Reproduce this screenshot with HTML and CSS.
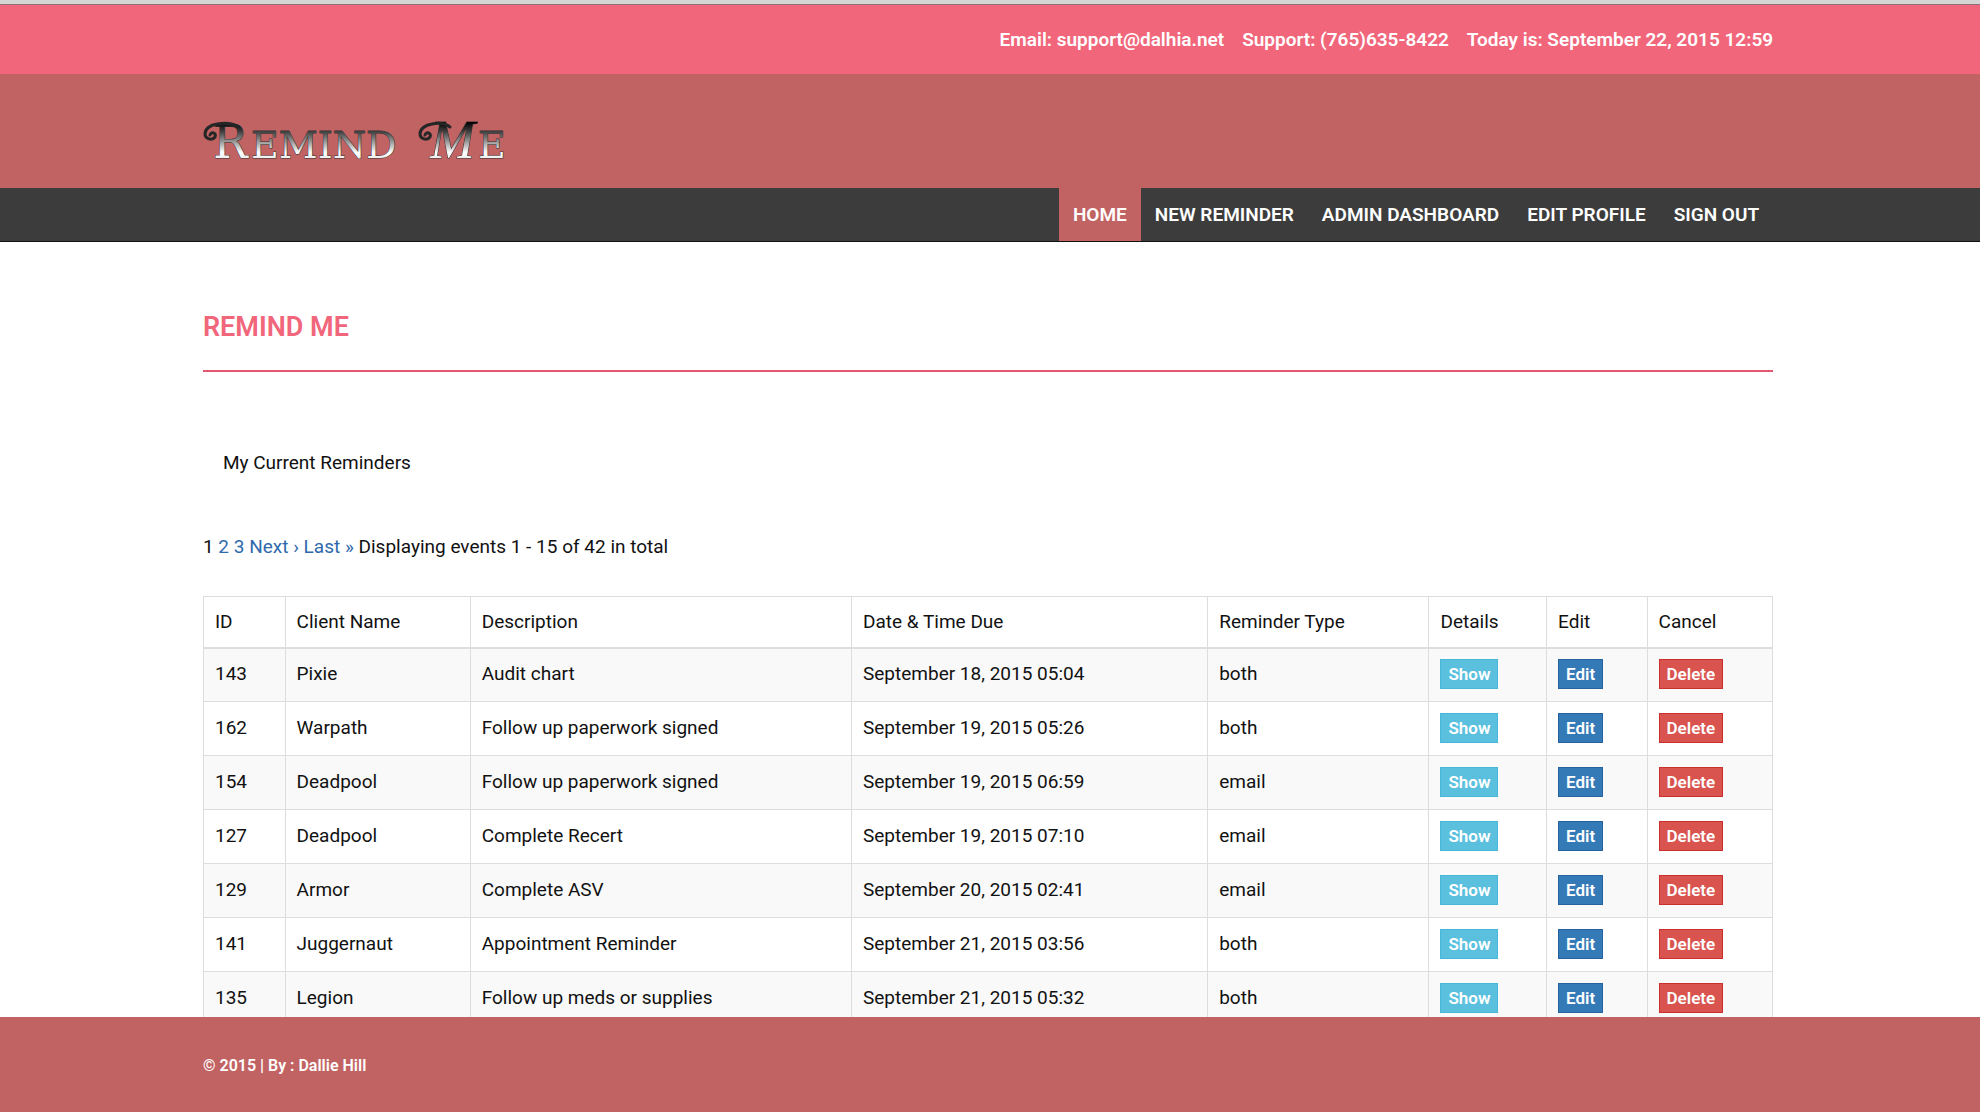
FILE: index.html
```html
<!DOCTYPE html>
<html lang="en">
<head>
<meta charset="utf-8">
<title>Remind Me</title>
<meta name="viewport" content="width=device-width, initial-scale=1">
<link rel="stylesheet" href="styles.css">
</head>
<body>
<header>
  <div class="topbar">
    <div class="container topbar-inner">
      <span>Email: support@dalhia.net</span>
      <span>Support: (765)635-8422</span>
      <span>Today is: September 22, 2015 12:59</span>
    </div>
  </div>
  <div class="brand">
    <div class="container">
      <a class="logo" href="#">
        <svg width="306" height="42" viewBox="0 0 306 42" role="img" aria-label="Remind Me">
          <defs>
            <linearGradient id="metal" gradientUnits="userSpaceOnUse" x1="0" y1="3" x2="0" y2="39">
              <stop offset="0" stop-color="#000"/>
              <stop offset=".25" stop-color="#3a3a3a"/>
              <stop offset=".55" stop-color="#9a9a9a"/>
              <stop offset=".85" stop-color="#fff"/>
              <stop offset="1" stop-color="#eee"/>
            </linearGradient>
          </defs>
          <g class="logo-text">
            <text class="logo-cap" x="10" y="39">R</text>
            <text class="logo-small" x="48" y="39">EMIND</text>
            <text class="logo-cap logo-cap-m" x="227" y="39">M</text>
            <text class="logo-small" x="275" y="39">E</text>
          </g>
          <g class="logo-swash">
            <path d="M34 7C27 3 19 4 14 5C7 6 2 10 2 15C2 20 9 22 12 18C14 14 8 12 7 16"/>
            <path d="M247 8C241 3 234 4 229 5C222 6 217 10 217 15C217 20 224 22 227 18C229 14 223 12 222 16"/>
          </g>
        </svg>
      </a>
    </div>
  </div>
  <nav class="menu">
    <ul class="container menu-list">
      <li><a class="active" href="#">HOME</a></li>
      <li><a href="#">NEW REMINDER</a></li>
      <li><a href="#">ADMIN DASHBOARD</a></li>
      <li><a href="#">EDIT PROFILE</a></li>
      <li><a href="#">SIGN OUT</a></li>
    </ul>
  </nav>
</header>
<main>
  <div class="container">
    <h1>REMIND ME</h1>
    <h2>My Current Reminders</h2>
    <p class="pages">1 <a href="#">2</a> <a href="#">3</a> <a href="#">Next ›</a> <a href="#">Last »</a> Displaying events 1 - 15 of 42 in total</p>
    <table>
      <colgroup><col class="c-id"><col class="c-client"><col class="c-desc"><col class="c-date"><col class="c-type"><col class="c-show"><col class="c-edit"><col class="c-cancel"></colgroup>
      <thead>
        <tr><th>ID</th><th>Client Name</th><th>Description</th><th>Date &amp; Time Due</th><th>Reminder Type</th><th>Details</th><th>Edit</th><th>Cancel</th></tr>
      </thead>
      <tbody>
        <tr><td>143</td><td>Pixie</td><td>Audit chart</td><td>September 18, 2015 05:04</td><td>both</td><td><button class="show">Show</button></td><td><button class="edit">Edit</button></td><td><button class="delete">Delete</button></td></tr>
        <tr><td>162</td><td>Warpath</td><td>Follow up paperwork signed</td><td>September 19, 2015 05:26</td><td>both</td><td><button class="show">Show</button></td><td><button class="edit">Edit</button></td><td><button class="delete">Delete</button></td></tr>
        <tr><td>154</td><td>Deadpool</td><td>Follow up paperwork signed</td><td>September 19, 2015 06:59</td><td>email</td><td><button class="show">Show</button></td><td><button class="edit">Edit</button></td><td><button class="delete">Delete</button></td></tr>
        <tr><td>127</td><td>Deadpool</td><td>Complete Recert</td><td>September 19, 2015 07:10</td><td>email</td><td><button class="show">Show</button></td><td><button class="edit">Edit</button></td><td><button class="delete">Delete</button></td></tr>
        <tr><td>129</td><td>Armor</td><td>Complete ASV</td><td>September 20, 2015 02:41</td><td>email</td><td><button class="show">Show</button></td><td><button class="edit">Edit</button></td><td><button class="delete">Delete</button></td></tr>
        <tr><td>141</td><td>Juggernaut</td><td>Appointment Reminder</td><td>September 21, 2015 03:56</td><td>both</td><td><button class="show">Show</button></td><td><button class="edit">Edit</button></td><td><button class="delete">Delete</button></td></tr>
        <tr><td>135</td><td>Legion</td><td>Follow up meds or supplies</td><td>September 21, 2015 05:32</td><td>both</td><td><button class="show">Show</button></td><td><button class="edit">Edit</button></td><td><button class="delete">Delete</button></td></tr>
      </tbody>
    </table>
  </div>
</main>
<footer>
  <div class="container">© 2015 | By : Dallie Hill</div>
</footer>
</body>
</html>
```

FILE: styles.css
```css
* { box-sizing: border-box; }

body {
  margin: 0;
  height: 100vh;
  display: flex;
  flex-direction: column;
  background: #fff;
  color: #111;
  font: 19px/28px Roboto, "Liberation Sans", sans-serif;
}

header, footer { flex: none; }

a { color: #2f69ad; text-decoration: none; }

.container {
  width: 100%;
  padding: 0 calc(10.4% + 1px) 0 calc(10.2% + 1px);
}

.topbar {
  border-top: 4px solid #d5d5d5;
  background: #f1667b;
  color: #fff;
  font-weight: 600;
  box-shadow: inset 0 1px #8d7078;
}

.topbar-inner {
  display: flex;
  justify-content: flex-end;
  gap: 18px;
  padding-top: 22px;
  padding-bottom: 20px;
}

.brand {
  background: #c26363;
  padding: 45px 0 27px;
}

.logo { display: block; width: 306px; height: 42px; }
.logo svg { display: block; overflow: visible; }

.logo-text {
  fill: url(#metal);
  stroke: #333;
  stroke-width: 1px;
  paint-order: stroke;
  font-family: "DejaVu Serif", serif;
}

.logo-cap { font-size: 46px; }
.logo-cap-m { font-family: "Liberation Serif", serif; font-size: 54px; font-style: italic; }
.logo-small { font-size: 38px; }

.logo-swash {
  fill: none;
  stroke: #262626;
  stroke-width: 3px;
  stroke-linecap: round;
}

.menu {
  background: #3c3c3c;
  border-bottom: 1px solid #111;
}

.menu-list {
  display: flex;
  justify-content: flex-end;
  list-style: none;
  margin: 0;
}

.menu-list a {
  display: block;
  padding: 13px 14px 12px;
  color: #fff;
  font-weight: 600;
}

.menu-list .active { background: #c26363; }

main {
  flex: 1;
  min-height: 0;
  overflow: auto;
  scrollbar-width: none;
}

h1 {
  margin: 65px 0 0;
  padding-bottom: 23px;
  border-bottom: 2px solid #e4566f;
  color: #f1667b;
  font-size: 27px;
  line-height: 40px;
  font-weight: 600;
}

h2 {
  margin: 0;
  padding: 77px 20px 0;
  font-size: 19px;
  line-height: 28px;
  font-weight: 400;
}

.pages { margin: 56px 0 35px; }

table {
  width: 100%;
  table-layout: fixed;
  border-collapse: collapse;
}

th, td {
  height: 54px;
  padding: 0 11px 2px;
  border: 1px solid #ddd;
  text-align: left;
  font-weight: 400;
}

th {
  height: 51px;
  padding-bottom: 0;
  border-bottom-width: 2px;
}

tbody tr:nth-child(odd) { background: #f9f9f9; }

.c-id { width: 5.2%; }
.c-client { width: 11.8%; }
.c-desc { width: 24.3%; }
.c-date { width: 22.7%; }
.c-type { width: 14.1%; }
.c-show { width: 7.5%; }
.c-edit { width: 6.4%; }
.c-cancel { width: 8%; }

button {
  display: block;
  height: 30px;
  padding: 0 7px;
  border: 1px solid;
  color: #fff;
  font: 600 17px/28px Roboto, "Liberation Sans", sans-serif;
  cursor: pointer;
}

.show { background: #5bc0de; border-color: #46b8da; }
.edit { background: #337ab7; border-color: #2463a0; }
.delete { background: #d9534f; border-color: #c9302c; }

footer {
  padding: 35px 0 32px;
  background: #c26363;
  color: #fff;
  font-size: 16px;
  font-weight: 600;
}
```
